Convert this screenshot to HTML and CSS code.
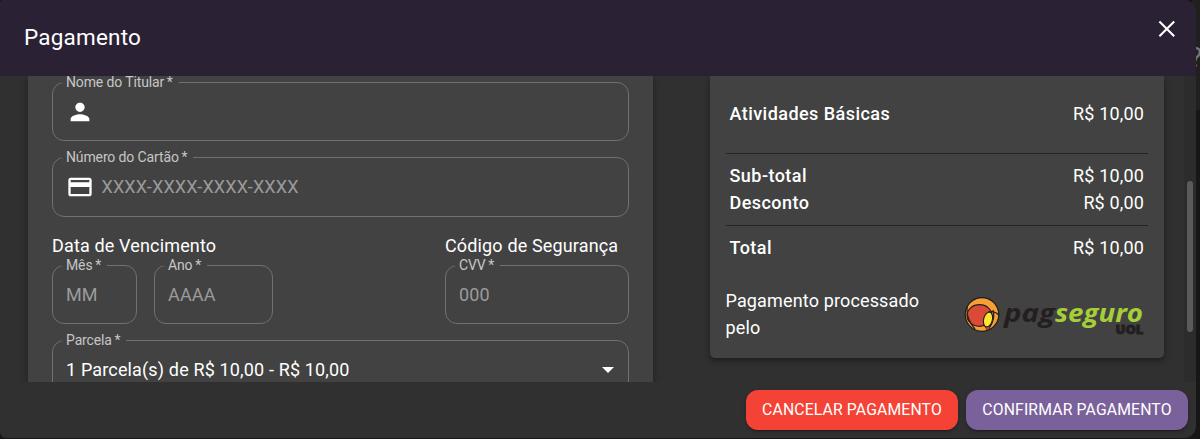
FILE: index.html
```html
<!DOCTYPE html>
<html lang="pt-BR">
<head>
<meta charset="utf-8">
<title>Pagamento</title>
<link rel="stylesheet" href="styles.css">
</head>
<body>
<div class="backdrop"><span class="backdrop-mark">?</span></div>
<main class="dialog">
  <header class="dialog-header">
    <h1 class="dialog-title">Pagamento</h1>
    <svg class="close" viewBox="0 0 24 24" width="24" height="24"><path fill="none" stroke="#fff" stroke-width="2.1" d="M4.4 4.4 19.2 19.2M19.2 4.4 4.4 19.2"/></svg>
  </header>
  <div class="dialog-body">
    <section class="card form-card">
      <fieldset class="field name-field">
        <legend>Nome do Titular&thinsp;*</legend>
        <svg class="field-icon" viewBox="0 0 24 24" width="28" height="28"><path fill="#fff" d="M12 12c2.21 0 4-1.79 4-4s-1.79-4-4-4-4 1.79-4 4 1.79 4 4 4zm0 2c-2.67 0-8 1.34-8 4v2h16v-2c0-2.66-5.33-4-8-4z"/></svg>
      </fieldset>
      <fieldset class="field number-field">
        <legend>Número do Cartão&thinsp;*</legend>
        <svg class="field-icon" viewBox="0 0 24 24" width="28" height="28"><path fill="#fff" d="M20 4H4c-1.11 0-1.99.89-1.99 2L2 18c0 1.11.89 2 2 2h16c1.11 0 2-.89 2-2V6c0-1.11-.89-2-2-2zm0 14H4v-6h16v6zm0-10H4V6h16v2z"/></svg>
        <span class="placeholder">XXXX-XXXX-XXXX-XXXX</span>
      </fieldset>
      <div class="card-details">
        <div class="expiry">
          <h2 class="group-title">Data de Vencimento</h2>
          <div class="expiry-fields">
            <fieldset class="field month"><legend>Mês&thinsp;*</legend><span class="placeholder">MM</span></fieldset>
            <fieldset class="field year"><legend>Ano&thinsp;*</legend><span class="placeholder">AAAA</span></fieldset>
          </div>
        </div>
        <div class="security">
          <h2 class="group-title">Código de Segurança</h2>
          <fieldset class="field"><legend>CVV&thinsp;*</legend><span class="placeholder">000</span></fieldset>
        </div>
      </div>
      <fieldset class="field select">
        <legend>Parcela&thinsp;*</legend>
        <span class="select-value">1 Parcela(s) de R$ 10,00 - R$ 10,00</span>
        <span class="arrow"></span>
      </fieldset>
    </section>
    <section class="card summary">
      <div class="row item"><span class="name">Atividades Básicas</span><span>R$ 10,00</span></div>
      <div class="totals">
        <div class="row"><span class="name">Sub-total</span><span>R$ 10,00</span></div>
        <div class="row"><span class="name">Desconto</span><span>R$ 0,00</span></div>
      </div>
      <div class="row total"><span class="name">Total</span><span>R$ 10,00</span></div>
      <div class="processor">
        <p class="processor-text">Pagamento processado pelo</p>
        <svg class="logo" viewBox="0 0 180 40" width="180" height="40">
          <defs><clipPath id="ball"><circle cx="18" cy="19.5" r="16.6"/></clipPath></defs>
          <circle cx="18" cy="19.5" r="16.6" fill="#f6a033"/>
          <g clip-path="url(#ball)" stroke="#231f20" stroke-width="1.2">
            <ellipse cx="15.5" cy="20.5" rx="12.5" ry="10.8" fill="#db4a37"/>
            <path d="M5 5Q-1 20 11 34" fill="none"/>
            <path d="M24 17q8-2 12 5M29 15q3 11-6 20" fill="none"/>
            <path d="M19 29q5 5 8 1l-3 6z" fill="#db4a37" stroke-width=".7"/>
            <ellipse cx="24" cy="24.5" rx="4.4" ry="7.5" transform="rotate(14 24 24.5)" fill="#ffe52f"/>
          </g>
          <circle cx="18" cy="19.5" r="16.8" fill="none" stroke="#231f20" stroke-width="1.2"/>
          <text class="logo-pag" x="40" y="27" textLength="51" lengthAdjust="spacingAndGlyphs">pag</text>
          <text class="logo-seguro" x="91" y="27" textLength="88" lengthAdjust="spacingAndGlyphs">seguro</text>
          <text class="logo-uol" x="151.5" y="38.6" textLength="28" lengthAdjust="spacingAndGlyphs">UOL</text>
        </svg>
      </div>
    </section>
    <div class="scrollbar"><div class="thumb"></div></div>
  </div>
  <footer class="dialog-actions">
    <button class="btn cancel">CANCELAR PAGAMENTO</button>
    <button class="btn confirm">CONFIRMAR PAGAMENTO</button>
  </footer>
</main>
</body>
</html>
```
FILE: styles.css
```css
* { box-sizing: border-box; }
body {
  margin: 0;
  width: 1200px;
  height: 439px;
  overflow: hidden;
  background: #171717;
  color: #fff;
  font: 400 18px/27px Roboto, sans-serif;
  letter-spacing: .15px;
}
.backdrop {
  position: absolute;
  right: 0;
  top: 0;
  width: 8px;
  height: 110px;
  background: #202020;
  overflow: hidden;
}
.backdrop-mark {
  position: absolute;
  top: 44px;
  left: -3px;
  color: #777;
  font-size: 28px;
}
.dialog {
  position: relative;
  display: flex;
  flex-direction: column;
  width: 1196px;
  height: 438px;
  overflow: hidden;
  border-radius: 4px 12px 12px 6px;
  background: #303030;
}
.dialog-header {
  display: flex;
  justify-content: space-between;
  flex: 0 0 76px;
  padding: 17px 17px 0 24px;
  background: #2a2135;
}
.dialog-title { margin: 4px 0 0; font-size: 22.5px; line-height: 32px; font-weight: 400; letter-spacing: .2px; }
.close { display: block; }
.dialog-body { display: flex; flex: 0 0 306px; align-items: flex-start; overflow: hidden; padding-left: 28px; }
.card { background: #424242; box-shadow: 0 2px 4px -1px rgba(0,0,0,.2), 0 4px 5px rgba(0,0,0,.14), 0 1px 10px rgba(0,0,0,.12); }
.form-card { flex: 0 0 625px; height: 340px; margin-right: 57px; padding: 6px 24px 0; }
.field {
  display: flex;
  align-items: center;
  min-width: 0;
  height: 59px;
  margin: 0;
  padding: 0 13px;
  border: 1px solid #707070;
  border-radius: 12px;
}
.field legend {
  height: 1px;
  margin-left: -5px;
  padding: 0 6px 0 5px;
  color: #c6c6c6;
  font-size: 14px;
  line-height: 0;
  letter-spacing: -.13px;
  white-space: nowrap;
}
.field-icon { display: block; margin: 0 8px 0 -.5px; }
.placeholder { color: #9b9b9b; }
.number-field { height: 60px; margin-top: 16px; padding-bottom: 1px; }
.card-details { display: flex; justify-content: space-between; margin-top: 15px; }
.group-title { margin: 0 0 6px; font-size: 18px; line-height: 27px; font-weight: 400; }
.expiry-fields { display: flex; gap: 17px; }
.month { width: 85px; }
.year { width: 119px; }
.security { width: 184px; }
.select { justify-content: space-between; margin-top: 16px; }
.arrow { margin-right: 1px; border: 6px solid transparent; border-top-color: #fff; border-bottom: 0; }
.summary { flex: 0 0 454px; height: 282px; margin-right: 20px; padding: 0 16px; border-radius: 0 0 5px 5px; }
.row { display: flex; justify-content: space-between; padding: 0 4px 0 3.5px; }
.name { font-weight: 500; letter-spacing: .45px; }
.item { padding-top: 24px; height: 77px; }
.totals { height: 72px; padding-top: 8px; border-top: 1px solid #26232f; }
.total { height: 62px; padding-top: 8px; border-top: 1px solid #26232f; }
.processor { display: flex; justify-content: space-between; }
.processor-text { width: 210px; margin: 0 0 0 -.5px; }
.logo { display: block; margin: 8px 4px 0 0; }
.logo text { font-family: "Open Sans", sans-serif; font-style: italic; font-weight: 700; letter-spacing: 0; }
.logo .logo-pag { fill: #231f20; font-size: 25px; }
.logo .logo-seguro { fill: #a5ce39; font-size: 25px; }
.logo .logo-uol { fill: #231f20; font-size: 12px; font-style: normal; font-weight: 800; stroke: #231f20; stroke-width: .8px; }
.scrollbar { width: 12px; height: 306px; padding: 105px 3px 0; background: #2c2c2c; }
.thumb { height: 151px; border-radius: 3px; background: #5b5b5b; }
.dialog-actions { display: flex; justify-content: flex-end; gap: 8px; padding: 8px; }
.btn {
  height: 40px;
  padding: 0 0 2px;
  border: 0;
  border-radius: 12px;
  color: #fff;
  font: 400 15.75px/27px Roboto, sans-serif;
  letter-spacing: .14px;
  box-shadow: 0 3px 1px -2px rgba(0,0,0,.2), 0 2px 2px rgba(0,0,0,.14), 0 1px 5px rgba(0,0,0,.12);
}
.cancel { width: 212px; background: #f44336; }
.confirm { width: 222px; background: #7b619b; }
```
